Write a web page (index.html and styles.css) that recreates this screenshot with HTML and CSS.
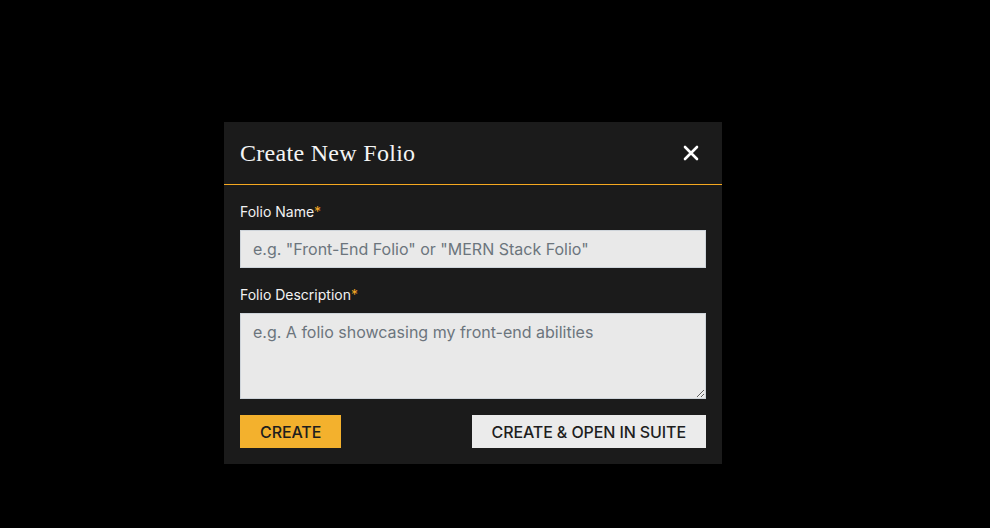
FILE: index.html
```html
<!DOCTYPE html>
<html lang="en">
<head>
<meta charset="utf-8">
<title>Create New Folio</title>
<link rel="stylesheet" href="styles.css">
</head>
<body>
<div class="modal">
  <div class="modal-header">
    <h2 class="modal-title">Create New Folio</h2>
    <button class="close" type="button" aria-label="Close">
      <svg width="16" height="16" viewBox="0 0 16 16"><path d="M2 2 L14 14 M14 2 L2 14" stroke="#ffffff" stroke-width="2.6" stroke-linecap="round"/></svg>
    </button>
  </div>
  <form class="modal-body">
    <label class="label" for="name">Folio Name<span class="req">*</span></label>
    <input class="control" id="name" type="text" placeholder="e.g. &quot;Front-End Folio&quot; or &quot;MERN Stack Folio&quot;">
    <label class="label gap" for="desc">Folio Description<span class="req">*</span></label>
    <textarea class="control area" id="desc" rows="3" placeholder="e.g. A folio showcasing my front-end abilities"></textarea>
    <div class="actions">
      <button class="btn btn-primary" type="button">CREATE</button>
      <button class="btn btn-light" type="button">CREATE &amp; OPEN IN SUITE</button>
    </div>
  </form>
</div>
</body>
</html>
```
FILE: styles.css
```css
html, body {
  margin: 0;
  background: #000;
  height: 100%;
}
body {
  font-family: Inter, "Noto Sans", sans-serif;
  color: #212529;
  overflow: hidden;
}
.modal {
  width: 498px;
  margin: 122px 0 0 224px;
  background: #1b1b1b;
}
.modal-header {
  display: flex;
  align-items: center;
  justify-content: space-between;
  padding: 16px;
  border-bottom: 1px solid #f5a820;
}
.modal-title {
  margin: 0;
  font-family: "Liberation Serif", "Times New Roman", serif;
  font-weight: 400;
  font-size: 24px;
  line-height: 30px;
  color: #f4f4f4;
  letter-spacing: 0.3px;
}
.close {
  background: none;
  border: 0;
  padding: 0;
  margin-right: 7px;
  width: 16px;
  height: 16px;
  display: flex;
  cursor: pointer;
}
.modal-body {
  display: flex;
  flex-direction: column;
  padding: 16px;
  margin: 0;
}
.label {
  font-size: 14px;
  line-height: 21px;
  color: #f2f2f2;
  margin-bottom: 8px;
}
.label.gap {
  margin-top: 16px;
}
.req {
  color: #f5a623;
}
.control {
  box-sizing: border-box;
  font-family: Inter, "Noto Sans", sans-serif;
  font-size: 16px;
  line-height: 24px;
  height: 38px;
  padding: 6px 12px;
  border: 1px solid #ced4da;
  border-radius: 0;
  background: #e9e9e9;
  color: #212529;
  margin: 0;
  width: 100%;
}
.control::placeholder {
  color: #6c757d;
}
.area {
  height: 86px;
  resize: vertical;
  display: block;
}
.actions {
  display: flex;
  justify-content: space-between;
  margin-top: 16px;
}
.btn {
  font-family: Inter, "Noto Sans", sans-serif;
  font-size: 16px;
  font-weight: 500;
  line-height: 24px;
  letter-spacing: -0.1px;
  height: 33px;
  padding: 0 20px;
  border: 0;
  border-radius: 0;
  color: #1e1e1e;
  cursor: pointer;
}
.btn-primary {
  background: #f3b12d;
}
.btn-light {
  background: #ebebeb;
}
```
